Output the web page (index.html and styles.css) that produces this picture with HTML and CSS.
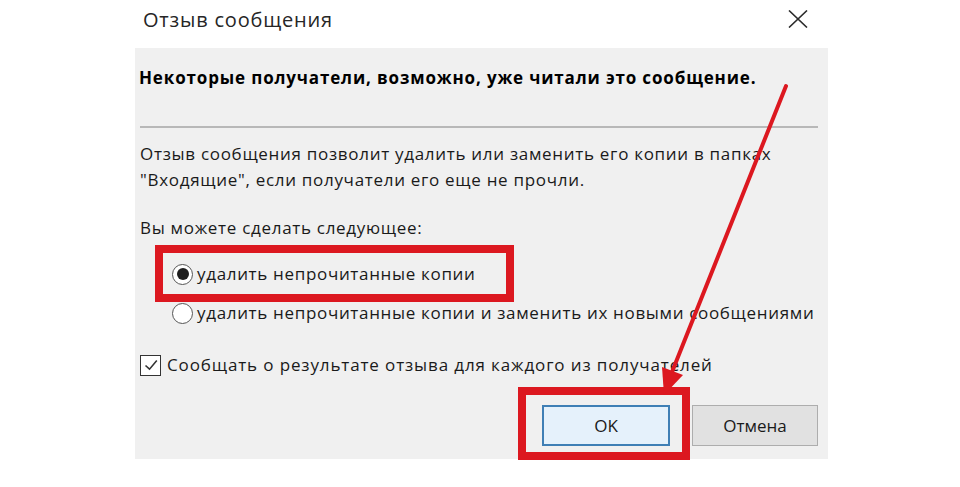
FILE: index.html
```html
<!DOCTYPE html>
<html lang="ru">
<head>
    <meta charset="UTF-8">
    <meta name="viewport" content="width=device-width, initial-scale=1.0">
    <title>Отзыв сообщения</title>
    <link rel="stylesheet" href="styles.css">
</head>
<body>

    <div class="dialog">
        <div class="dialog-title">
            <span class="dialog-title-text">Отзыв сообщения</span>
            <svg class="dialog-close" width="20" height="18" viewBox="0 0 20 18">
                <path d="M1 0.5 L19 17.5 M19 0.5 L1 17.5" stroke="#2b2b2b" stroke-width="1.6" fill="none"/>
            </svg>
        </div>

        <div class="dialog-body">
            <h4 class="dialog-warning">Некоторые получатели, возможно, уже читали это сообщение.</h4>
            <div class="dialog-separator"></div>

            <p class="dialog-text">Отзыв сообщения позволит удалить или заменить его копии в папках<br>"Входящие", если получатели его еще не прочли.</p>
            <p class="dialog-text dialog-choose">Вы можете сделать следующее:</p>

            <div class="option-list">
                <div class="option">
                    <span class="radio radio-checked"></span>
                    <span>удалить непрочитанные копии</span>
                </div>
                <div class="option">
                    <span class="radio"></span>
                    <span>удалить непрочитанные копии и заменить их новыми сообщениями</span>
                </div>
            </div>

            <div class="option option-check">
                <span class="checkbox">
                    <svg width="14" height="12" viewBox="0 0 14 12">
                        <path d="M1.5 6.5 L5.5 10.2 L12.8 1.5" stroke="#333" stroke-width="1.6" fill="none"/>
                    </svg>
                </span>
                <span>Сообщать о результате отзыва для каждого из получателей</span>
            </div>

            <div class="dialog-buttons">
                <button class="btn btn-default">OK</button>
                <button class="btn">Отмена</button>
            </div>
        </div>
    </div>

    <!-- red marks on top of the dialog -->
    <div class="mark mark-option"></div>
    <div class="mark mark-ok"></div>
    <svg class="mark-arrow" width="960" height="487" viewBox="0 0 960 487">
        <line x1="786" y1="86" x2="672" y2="372" stroke="#dc1820" stroke-width="4" stroke-linecap="round"/>
        <polygon points="664,395 683,375 662,367" fill="#dc1820"/>
    </svg>

</body>
</html>
```

FILE: styles.css
```css
/* page */
body {
    margin: 0;
    background-color: #ffffff;
    font-family: "Open Sans", "Noto Sans", sans-serif;
    color: #1a1a1a;
}

/* dialog */
.dialog {
    width: 693px;
    margin-left: 135px;
}

.dialog-title {
    height: 48px;
    display: flex;
    justify-content: space-between;
    align-items: flex-start;
    padding: 0 20px 0 8px;
    box-sizing: border-box;
}

.dialog-title-text {
    font-size: 20px;
    line-height: 24px;
    letter-spacing: 0.8px;
    margin-top: 8px;
    color: #262626;
}

.dialog-close {
    margin-top: 10px;
}

.dialog-body {
    height: 411px;
    background-color: #f0f0f0;
    padding: 0 10px 0 5px;
    box-sizing: border-box;
    display: flex;
    flex-direction: column;
}

.dialog-warning {
    margin: 19px 0 0 -1px;
    font-size: 17px;
    line-height: 22px;
    letter-spacing: 0.85px;
    font-weight: 700;
    color: #000;
}

.dialog-separator {
    height: 2px;
    margin-top: 37px;
    background-color: #b8b8b8;
}

.dialog-text {
    margin: 13px 0 0;
    font-size: 17px;
    line-height: 26px;
    letter-spacing: 0.7px;
}

.dialog-choose {
    margin-top: 22px;
}

/* options */
.option-list {
    display: flex;
    flex-direction: column;
    gap: 17px;
    margin: 22px 0 0 32px;
}

.option {
    display: flex;
    align-items: center;
    gap: 4px;
    font-size: 17px;
    line-height: 22px;
    letter-spacing: 0.67px;
}

.radio {
    width: 21px;
    height: 21px;
    border: 1px solid #555;
    border-radius: 50%;
    background-color: #fff;
    box-sizing: border-box;
    display: flex;
    align-items: center;
    justify-content: center;
}

.radio-checked::after {
    content: "";
    width: 12px;
    height: 12px;
    border-radius: 50%;
    background-color: #1e1e1e;
}

.option-check {
    margin-top: 30px;
    gap: 6px;
    letter-spacing: 0.87px;
}

.checkbox {
    width: 21px;
    height: 21px;
    border: 1.5px solid #333;
    background-color: #fff;
    box-sizing: border-box;
    display: flex;
    align-items: center;
    justify-content: center;
}

/* buttons */
.dialog-buttons {
    display: flex;
    justify-content: flex-end;
    gap: 22px;
    margin-top: 29px;
}

.btn {
    width: 126px;
    height: 41px;
    font-family: inherit;
    font-size: 17px;
    color: #1a1a1a;
    background-color: #e1e1e1;
    border: 1px solid #adadad;
}

.btn-default {
    width: 128px;
    background-color: #e5f1fb;
    border: 2px solid #3f7fb5;
}

/* red marks */
.mark {
    position: absolute;
    border: 8px solid #dc1820;
    box-sizing: border-box;
}

.mark-option {
    left: 155px;
    top: 245px;
    width: 359px;
    height: 57px;
}

.mark-ok {
    left: 518px;
    top: 387px;
    width: 172px;
    height: 73px;
}

.mark-arrow {
    position: absolute;
    left: 0;
    top: 0;
    pointer-events: none;
}
```
